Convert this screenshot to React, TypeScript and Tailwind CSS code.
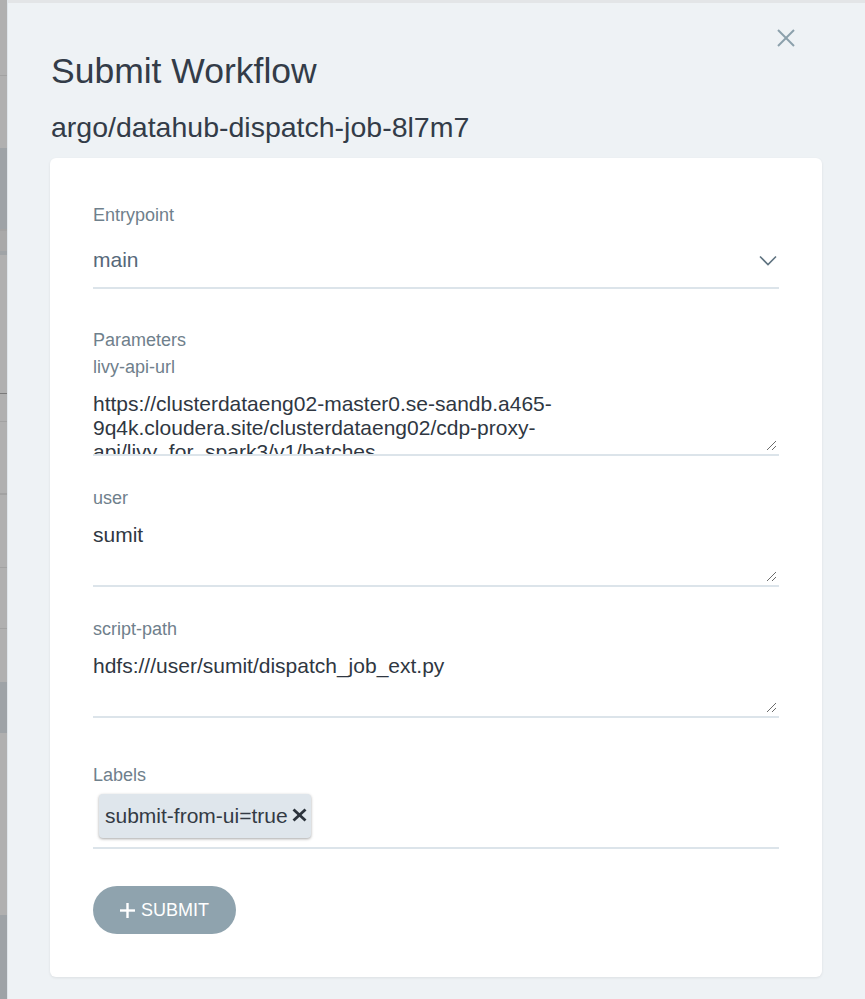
import React from "react";

const Grip = () => (
  <svg className="absolute right-[2px] bottom-[3px]" width="11" height="11" viewBox="0 0 11 11">
    <line x1="1" y1="10" x2="10" y2="1" stroke="#6b6b6b" strokeWidth="1" />
    <line x1="6" y1="10" x2="10" y2="6" stroke="#6b6b6b" strokeWidth="1" />
  </svg>
);

function Field({ label, lines }: { label: string; lines: string[] }) {
  return (
    <div>
      <div className="h-[20px] leading-[20px] text-[18px] text-[#6f808c]">{label}</div>
      <div className="relative mt-[5px] h-[74px] pt-[10px] overflow-hidden border-b-2 border-[#dce4ea] text-[21px] leading-[24px] text-[#2f3742]">
        {lines.map((l, i) => (
          <div key={i} className="whitespace-pre">{l}</div>
        ))}
        <Grip />
      </div>
    </div>
  );
}

export default function App() {
  const bands: [number, string][] = [
    [75, "#b0b0b0"],
    [1, "#a2a2a2"],
    [72, "#b0b0b0"],
    [81, "#9ea3a7"],
    [2, "#a3a3a3"],
    [20, "#a9a9a9"],
    [4, "#a0a4a7"],
    [138, "#b0b0b0"],
    [1, "#7a7a7a"],
    [27, "#b0b0b0"],
    [1, "#a2a2a2"],
    [71, "#b0b0b0"],
    [2, "#a2a2a2"],
    [72, "#b0b0b0"],
    [1, "#a2a2a2"],
    [60, "#b0b0b0"],
    [1, "#a2a2a2"],
    [53, "#b0b0b0"],
    [51, "#9ea3a7"],
    [182, "#b0b0b0"],
    [85, "#9ea3a7"],
  ];
  return (
    <div className="w-[865px] h-[999px] flex overflow-hidden bg-[#eef2f5] font-['Liberation_Sans',Arial,sans-serif]">
      <div className="w-[7px] shrink-0 flex flex-col">
        {bands.map(([h, c], i) => (
          <div key={i} className="w-full shrink-0" style={{ height: h, backgroundColor: c }} />
        ))}
      </div>
      <div className="w-px shrink-0 bg-[#dfe5ea]" />
      <div className="relative flex-1 border-t-[3px] border-[#e3e5e7] pl-[42px] pt-[48px]">
        <button className="absolute top-[26px] right-[70px] w-[18px] h-[18px]" aria-label="close">
          <svg width="18" height="18" viewBox="0 0 18 18">
            <line x1="1" y1="1" x2="17" y2="17" stroke="#8ba0ab" strokeWidth="2" />
            <line x1="17" y1="1" x2="1" y2="17" stroke="#8ba0ab" strokeWidth="2" />
          </svg>
        </button>
        <h1 className="ml-px h-[40px] leading-[40px] text-[35.5px] text-[#333c48]">Submit Workflow</h1>
        <h2 className="ml-px mt-[20px] h-[32px] leading-[32px] text-[28.5px] text-[#333c48]">
          argo/datahub-dispatch-job-8l7m7
        </h2>
        <div className="mt-[15px] w-[772px] rounded-[6px] bg-white shadow-[0_1px_3px_rgba(0,0,0,0.08)] px-[43px] pt-[47px] pb-[43px]">
          <div className="h-[20px] leading-[20px] text-[18px] text-[#6f808c]">Entrypoint</div>
          <div className="mt-[10px] pt-[13px] pb-[15px] flex items-center justify-between border-b-2 border-[#dce4ea]">
            <span className="h-[24px] leading-[24px] text-[21px] text-[#56687a]">main</span>
            <svg className="mr-[2px]" width="18" height="11" viewBox="0 0 18 11">
              <polyline points="1,1.5 9,9.5 17,1.5" fill="none" stroke="#5f7380" strokeWidth="1.6" />
            </svg>
          </div>

          <div className="mt-[41px] h-[20px] leading-[20px] text-[18px] text-[#6f808c]">Parameters</div>
          <div className="mt-[7px]">
            <Field
              label="livy-api-url"
              lines={[
                "https://clusterdataeng02-master0.se-sandb.a465-",
                "9q4k.cloudera.site/clusterdataeng02/cdp-proxy-",
                "api/livy_for_spark3/v1/batches",
              ]}
            />
          </div>
          <div className="mt-[32px]">
            <Field label="user" lines={["sumit"]} />
          </div>
          <div className="mt-[32px]">
            <Field label="script-path" lines={["hdfs:///user/sumit/dispatch_job_ext.py"]} />
          </div>

          <div className="mt-[47px] h-[20px] leading-[20px] text-[18px] text-[#6f808c]">Labels</div>
          <div className="mt-[9px] pb-[9px] border-b-2 border-[#dce4ea] flex">
            <div className="ml-[6px] h-[44px] flex items-center pl-[6px] pr-[4px] rounded-[4px] bg-[#dfe6ec] shadow-[0_1px_3px_rgba(0,0,0,0.35)]">
              <span className="text-[21px] leading-[24px] text-[#333a44]">submit-from-ui=true</span>
              <svg className="ml-[4px] -mt-[3px]" width="15" height="14" viewBox="0 0 15 14">
                <line x1="1.5" y1="1.5" x2="13.5" y2="12.5" stroke="#2b323b" strokeWidth="2.8" />
                <line x1="13.5" y1="1.5" x2="1.5" y2="12.5" stroke="#2b323b" strokeWidth="2.8" />
              </svg>
            </div>
          </div>

          <button className="mt-[37px] h-[48px] w-[143px] rounded-full bg-[#8fa3ae] flex items-center justify-center gap-[6px] text-white">
            <svg width="15" height="15" viewBox="0 0 15 15">
              <line x1="7.5" y1="0" x2="7.5" y2="15" stroke="white" strokeWidth="2.4" />
              <line x1="0" y1="7.5" x2="15" y2="7.5" stroke="white" strokeWidth="2.4" />
            </svg>
            <span className="text-[18px] leading-[20px]">SUBMIT</span>
          </button>
        </div>
      </div>
    </div>
  );
}
